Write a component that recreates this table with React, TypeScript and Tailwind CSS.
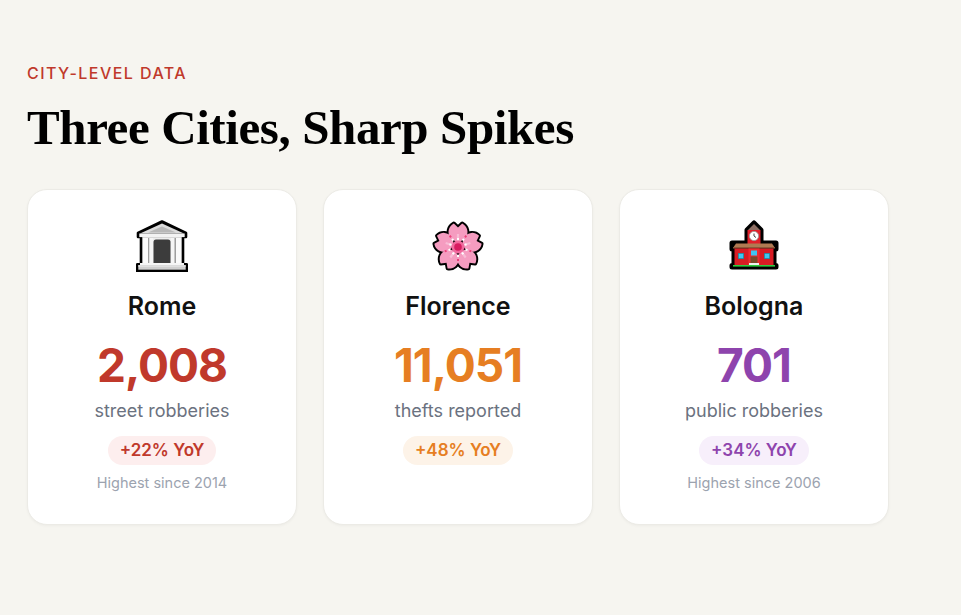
import React from "react";

const petal = "M0,-19.5 L-4.2,-23.5 A9.5,9.5 0 1 0 4.2,-23.5 Z";

function TempleIcon() {
  return (
    <svg width="52" height="52" viewBox="6 4 52 52">
      <g stroke="#000" strokeWidth="2.6" strokeLinejoin="round">
        <polygon points="32,5.5 56,17 56,21 53,21 53,47 57,48.5 57,55 7,55 7,48.5 11,47 11,21 8,21 8,17" fill="#000" />
      </g>
      <polygon points="32,7.5 54,17.5 10,17.5" fill="#dcdcdc" />
      <polygon points="32,10.5 46,16.5 18,16.5" fill="#b8b8b8" />
      <rect x="9.3" y="17.5" width="45.4" height="3.6" fill="#f2f2f2" />
      <rect x="12.3" y="21.1" width="39.4" height="26" fill="#ededed" />
      <rect x="13" y="22" width="5" height="25" fill="#fafafa" />
      <rect x="18" y="22" width="1.5" height="25" fill="#9e9e9e" />
      <rect x="19.5" y="22" width="3.5" height="25" fill="#f5f5f5" />
      <rect x="41" y="22" width="3.5" height="25" fill="#f5f5f5" />
      <rect x="44.5" y="22" width="1.5" height="25" fill="#9e9e9e" />
      <rect x="46" y="22" width="5" height="25" fill="#fafafa" />
      <path d="M23.5,47 L23.5,26 Q23.5,23.5 26,23.5 L38,23.5 Q40.5,23.5 40.5,26 L40.5,47 Z" fill="#3c3c3c" />
      <rect x="10" y="47" width="44" height="2.2" fill="#f5f5f5" />
      <rect x="8.3" y="49.2" width="47.4" height="4.5" fill="#cfcfcf" />
      <rect x="8.3" y="49.2" width="47.4" height="1.5" fill="#e6e6e6" />
    </svg>
  );
}

function BlossomIcon() {
  const angles = [0, 72, 144, 216, 288];
  const dots = [36, 108, 180, 252, 324];
  return (
    <svg width="52" height="52" viewBox="6 4 52 52">
      <g transform="translate(32,31)">
        {angles.map((a) => (
          <path key={"o" + a} d={petal} transform={`rotate(${a})`} fill="#000" stroke="#000" strokeWidth="3.8" strokeLinejoin="round" />
        ))}
        {angles.map((a) => (
          <path key={"f" + a} d={petal} transform={`rotate(${a})`} fill="#f59cc0" />
        ))}
        {angles.map((a) => (
          <path key={"l" + a} d="M0,-3 L0,-13" transform={`rotate(${a})`} stroke="#f8bcd5" strokeWidth="2.2" />
        ))}
        <circle r="6.5" fill="#f06a9e" />
        <circle r="3.8" fill="#d81b60" />
        {dots.map((a) => (
          <g key={"d" + a} transform={`rotate(${a})`}>
            <rect x="-1" y="-10" width="2" height="2" fill="#fff" />
            <rect x="-1" y="-14" width="2" height="2" fill="#ec407a" />
          </g>
        ))}
        {angles.map((a) => (
          <rect key={"w" + a} x="-1" y="-9" width="2" height="2" fill="#fff" transform={`rotate(${a})`} />
        ))}
      </g>
    </svg>
  );
}

function SchoolIcon() {
  return (
    <svg width="52" height="52" viewBox="6 4 52 52">
      <g stroke="#000" strokeWidth="5" strokeLinejoin="round">
        <polygon points="32,7 39,14 39,27 54,27 54,33 52,33 52,49.5 54,49.5 54,51 10,51 10,49.5 12,49.5 12,33 10,33 10,27 25,27 25,14" fill="#000" />
      </g>
      <polygon points="32,8 38,14 26,14" fill="#8d6e63" />
      <rect x="25.5" y="14" width="13" height="14" fill="#e0202a" />
      <circle cx="32" cy="20" r="4.6" fill="#fff" stroke="#9e9e9e" strokeWidth="0.8" />
      <path d="M32,17.5 L32,20 L34,21.5" stroke="#444" strokeWidth="1" fill="none" />
      <polygon points="11,32 14,27.5 50,27.5 53,32" fill="#b07a52" />
      <rect x="11" y="31" width="42" height="1.5" fill="#8a5a3a" />
      <rect x="12.5" y="32.5" width="39" height="16.5" fill="#d81c24" />
      <rect x="26.5" y="32.5" width="11" height="16.5" fill="#f02a30" />
      <rect x="16" y="37" width="6" height="6" fill="#2e7d8f" />
      <rect x="16.8" y="37.8" width="4.4" height="4.4" fill="#3fc6f2" />
      <rect x="42" y="37" width="6" height="6" fill="#2e7d8f" />
      <rect x="42.8" y="37.8" width="4.4" height="4.4" fill="#3fc6f2" />
      <rect x="29" y="34.5" width="6" height="5" fill="#3fc6f2" />
      <rect x="28.5" y="40.5" width="7" height="7" fill="#7a4a2a" />
      <rect x="27" y="47" width="10" height="2" fill="#f0f0f0" />
      <rect x="11" y="49" width="42" height="1.6" fill="#2ecc40" />
    </svg>
  );
}

type City = {
  icon: React.ReactNode;
  name: string;
  value: string;
  label: string;
  badge: string;
  note?: string;
  color: string;
  badgeBg: string;
};

const cities: City[] = [
  {
    icon: <TempleIcon />,
    name: "Rome",
    value: "2,008",
    label: "street robberies",
    badge: "+22% YoY",
    note: "Highest since 2014",
    color: "text-[#c0392b]",
    badgeBg: "bg-[#fdeeee]",
  },
  {
    icon: <BlossomIcon />,
    name: "Florence",
    value: "11,051",
    label: "thefts reported",
    badge: "+48% YoY",
    color: "text-[#e67e22]",
    badgeBg: "bg-[#fdf3e8]",
  },
  {
    icon: <SchoolIcon />,
    name: "Bologna",
    value: "701",
    label: "public robberies",
    badge: "+34% YoY",
    note: "Highest since 2006",
    color: "text-[#8e44ad]",
    badgeBg: "bg-[#f7effb]",
  },
];

export default function App() {
  return (
    <div
      className="min-h-[615px] w-full bg-[#f6f5f0] px-[27px] pt-[62px]"
      style={{ fontFamily: "Inter, 'Noto Sans', sans-serif" }}
    >
      <div className="text-[16px] leading-[22px] font-medium tracking-[0.09em] text-[#c0392b] uppercase">
        City-level data
      </div>
      <h1
        className="mt-[16px] text-[49px] leading-[56px] font-bold text-black tracking-[-0.4px]"
        style={{ fontFamily: "'Liberation Serif', 'DejaVu Serif', serif" }}
      >
        Three Cities, Sharp Spikes
      </h1>
      <div className="mt-[33px] grid grid-cols-[270px_270px_270px] gap-[26px]">
        {cities.map((c) => (
          <div
            key={c.name}
            className="flex h-[336px] flex-col items-center rounded-[20px] border border-[#ecebe6] bg-white pt-[30px] shadow-[0_1px_3px_rgba(0,0,0,0.04)]"
          >
            <div className="h-[52px] w-[52px]">{c.icon}</div>
            <div className="mt-[19px] text-[25px] leading-[30px] font-semibold text-[#111]">
              {c.name}
            </div>
            <div className={`mt-[16px] text-[46px] leading-[56px] font-bold tracking-[-1px] ${c.color}`}>
              {c.value}
            </div>
            <div className="mt-[6px] text-[18px] leading-[24px] text-[#6b7280]">
              {c.label}
            </div>
            <div
              className={`mt-[13px] rounded-full px-[12px] text-[17px] leading-[29px] font-semibold ${c.badgeBg} ${c.color}`}
            >
              {c.badge}
            </div>
            {c.note && (
              <div className="mt-[7px] text-[14.5px] leading-[22px] text-[#9ca3af]">
                {c.note}
              </div>
            )}
          </div>
        ))}
      </div>
    </div>
  );
}
